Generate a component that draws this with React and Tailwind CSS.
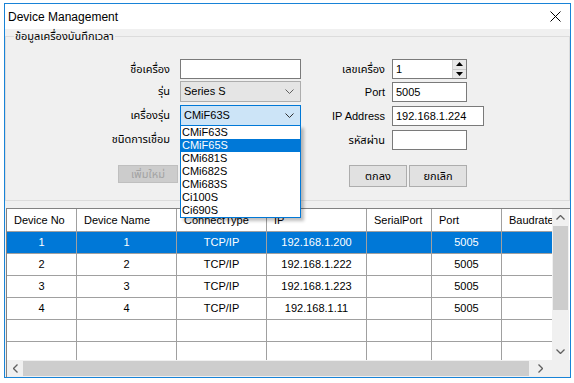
import React from "react";

const FONT = { fontFamily: '"Liberation Sans", "Noto Sans Thai", Tahoma, "DejaVu Sans", sans-serif' };

const MODELS = ["CMiF63S", "CMiF65S", "CMi681S", "CMi682S", "CMi683S", "Ci100S", "Ci690S"];

const COLS = [
  { name: "Device No", w: "w-[70px]" },
  { name: "Device Name", w: "w-[100px]" },
  { name: "ConnectType", w: "w-[90px]" },
  { name: "IP", w: "w-[100px]" },
  { name: "SerialPort", w: "w-[65px]" },
  { name: "Port", w: "w-[70px]" },
  { name: "Baudrate", w: "w-[70px]" },
];

const ROWS = [
  ["1", "1", "TCP/IP", "192.168.1.200", "", "5005", ""],
  ["2", "2", "TCP/IP", "192.168.1.222", "", "5005", ""],
  ["3", "3", "TCP/IP", "192.168.1.223", "", "5005", ""],
  ["4", "4", "TCP/IP", "192.168.1.11", "", "5005", ""],
  ["", "", "", "", "", "", ""],
  ["", "", "", "", "", "", ""],
];

function Chevron({ color = "#606060" }) {
  return (
    <svg width="9" height="6" viewBox="0 0 9 6" className="shrink-0">
      <path d="M0.5 0.5 L4.5 4.5 L8.5 0.5" fill="none" stroke={color} strokeWidth="1" />
    </svg>
  );
}

function Label({ children, w }) {
  return <div className={`${w} shrink-0 text-right text-[11px] leading-none text-black`}>{children}</div>;
}

function TextBox({ value, w = "w-[75px]", h = "h-[20px]" }) {
  return (
    <div className={`${w} ${h} shrink-0 bg-white border border-[#7a7a7a] flex items-center px-[3px] text-[11px] text-black`}>
      {value}
    </div>
  );
}

function Dropdown() {
  return (
    <div className="absolute -left-[1px] top-full z-20 w-[121px] bg-white border border-[#0078d7] shadow-[3px_3px_3px_rgba(0,0,0,0.25)]">
      {MODELS.map((m, i) => (
        <div
          key={m}
          className={`h-[13px] leading-[13px] pl-[1px] text-[11px] overflow-hidden ${i === 1 ? "bg-[#0078d7] text-white" : "text-black"}`}
        >
          {m}
        </div>
      ))}
    </div>
  );
}

export default function App() {
  return (
    <div className="w-[574px] h-[383px] bg-white overflow-hidden" style={FONT}>
      <div className="ml-[4px] mt-[3px] w-[567px] h-[375px] border border-[#1883d7] flex flex-col">
        {/* title bar */}
        <div className="h-[25px] bg-white flex items-center justify-between pl-[3px] pr-[9px]">
          <span className="text-[12px] text-black">Device Management</span>
          <svg width="11" height="11" viewBox="0 0 11 11">
            <path d="M0.5 0.5 L10.5 10.5 M10.5 0.5 L0.5 10.5" stroke="#000" strokeWidth="1" />
          </svg>
        </div>

        {/* body */}
        <div className="flex-1 bg-[#f0f0f0] flex flex-col">
          {/* group box */}
          <div className="mt-[7px] h-[165px] border border-[#dcdcdc]">
            <div className="-mt-[7px] ml-[8px] w-fit px-[1px] bg-[#f0f0f0] h-[13px] leading-[13px] text-[11px] text-black">
              ข้อมูลเครื่องบันทึกเวลา
            </div>
            <div className="mt-[16px] flex">
              {/* left column */}
              <div className="w-[295px] shrink-0 flex flex-col">
                <div className="h-[20px] flex items-center">
                  <Label w="w-[164px]">ชื่อเครื่อง</Label>
                  <div className="ml-[10px]">
                    <TextBox value="" w="w-[121px]" />
                  </div>
                </div>
                <div className="mt-[2px] h-[21px] flex items-center">
                  <Label w="w-[164px]">รุ่น</Label>
                  <div className="ml-[10px] w-[121px] h-[21px] bg-[#e5e5e5] border border-[#adadad] flex items-center justify-between pl-[3px] pr-[6px] text-[11px] text-black">
                    <span>Series S</span>
                    <Chevron />
                  </div>
                </div>
                <div className="mt-[3px] h-[21px] flex items-center">
                  <Label w="w-[164px]">เครื่องรุ่น</Label>
                  <div className="relative ml-[10px] w-[121px] h-[21px] bg-[#cce4f7] border border-[#0078d7] flex items-center justify-between pl-[3px] pr-[6px] text-[11px] text-black">
                    <span>CMiF63S</span>
                    <Chevron color="#303030" />
                    <Dropdown />
                  </div>
                </div>
                <div className="mt-[3px] h-[21px] flex items-center">
                  <Label w="w-[164px]">ชนิดการเชื่อม</Label>
                  <div className="ml-[10px] w-[121px] h-[21px] bg-[#e1e1e1] border border-[#adadad]" />
                </div>
                <div className="mt-[15px] ml-[112px] w-[60px] h-[18px] bg-[#cccccc] border border-[#bfbfbf] flex items-center justify-center text-[11px] text-[#a3a3a3]">
                  เพิ่มใหม่
                </div>
              </div>

              {/* right column */}
              <div className="w-[183px] shrink-0 flex flex-col">
                <div className="h-[20px] flex items-center">
                  <Label w="w-[84px]">เลขเครื่อง</Label>
                  <div className="ml-[7px] w-[75px] h-[20px] bg-white border border-[#7a7a7a] flex items-center text-[11px] text-black">
                    <span className="flex-1 pl-[3px]">1</span>
                    <div className="w-[14px] h-full flex flex-col border-l border-[#d0d0d0]">
                      <div className="flex-1 bg-[#e8e8e8] border-b border-[#c8c8c8] flex items-center justify-center">
                        <svg width="7" height="4" viewBox="0 0 7 4"><path d="M0 4 L3.5 0 L7 4 Z" fill="#000" /></svg>
                      </div>
                      <div className="flex-1 bg-[#e8e8e8] flex items-center justify-center">
                        <svg width="7" height="4" viewBox="0 0 7 4"><path d="M0 0 L3.5 4 L7 0 Z" fill="#000" /></svg>
                      </div>
                    </div>
                  </div>
                </div>
                <div className="mt-[3px] h-[20px] flex items-center">
                  <Label w="w-[84px]">Port</Label>
                  <div className="ml-[7px]"><TextBox value="5005" /></div>
                </div>
                <div className="mt-[4px] h-[20px] flex items-center">
                  <Label w="w-[84px]">IP Address</Label>
                  <div className="ml-[7px]"><TextBox value="192.168.1.224" w="w-[92px]" /></div>
                </div>
                <div className="mt-[4px] h-[20px] flex items-center">
                  <Label w="w-[84px]">รหัสผ่าน</Label>
                  <div className="ml-[7px]"><TextBox value="" /></div>
                </div>
                <div className="mt-[15px] ml-[48px] flex gap-[2px]">
                  <div className="w-[58px] h-[22px] bg-[#e1e1e1] border border-[#adadad] flex items-center justify-center text-[11px] text-black">ตกลง</div>
                  <div className="w-[58px] h-[22px] bg-[#e1e1e1] border border-[#adadad] flex items-center justify-center text-[11px] text-black">ยกเลิก</div>
                </div>
              </div>
            </div>
          </div>

          {/* data grid */}
          <div className="mt-[7px] ml-[1px] flex-1 border-t border-l border-[#828282] flex flex-col bg-white">
            <div className="h-[151px] flex">
              <div className="w-[545px] overflow-hidden">
                <div className="flex w-max h-[23px] border-b border-[#a0a0a0]">
                  {COLS.map((c) => (
                    <div key={c.name} className={`${c.w} h-full border-r border-[#a0a0a0] pl-[7px] flex items-center text-[11px] text-black whitespace-nowrap overflow-hidden`}>
                      {c.name}
                    </div>
                  ))}
                </div>
                {ROWS.map((r, ri) => (
                  <div
                    key={ri}
                    className={`flex w-max h-[22px] border-b border-[#a0a0a0] ${ri === 0 ? "bg-[#0078d7] text-white" : "text-black"}`}
                  >
                    {r.map((v, ci) => (
                      <div key={ci} className={`${COLS[ci].w} h-full border-r border-[#a0a0a0] flex items-center justify-center text-[11px]`}>
                        {v}
                      </div>
                    ))}
                  </div>
                ))}
              </div>
              {/* vertical scrollbar */}
              <div className="w-[17px] bg-[#f0f0f0] flex flex-col items-center">
                <div className="h-[17px] flex items-center justify-center">
                  <svg width="9" height="5" viewBox="0 0 9 5"><path d="M0.5 4.5 L4.5 0.5 L8.5 4.5" fill="none" stroke="#606060" strokeWidth="1.3" /></svg>
                </div>
                <div className="w-[15px] h-[84px] bg-[#cdcdcd]" />
                <div className="flex-1" />
                <div className="h-[17px] flex items-center justify-center">
                  <svg width="9" height="5" viewBox="0 0 9 5"><path d="M0.5 0.5 L4.5 4.5 L8.5 0.5" fill="none" stroke="#606060" strokeWidth="1.3" /></svg>
                </div>
              </div>
            </div>
            {/* horizontal scrollbar */}
            <div className="flex-1 flex">
              <div className="w-[545px] bg-[#f0f0f0] flex items-center">
                <div className="w-[16px] flex items-center justify-center">
                  <svg width="5" height="9" viewBox="0 0 5 9"><path d="M4.5 0.5 L0.5 4.5 L4.5 8.5" fill="none" stroke="#606060" strokeWidth="1.3" /></svg>
                </div>
                <div className="w-[506px] h-[15px] bg-[#cdcdcd]" />
                <div className="flex-1 flex items-center justify-center">
                  <svg width="5" height="9" viewBox="0 0 5 9"><path d="M0.5 0.5 L4.5 4.5 L0.5 8.5" fill="none" stroke="#606060" strokeWidth="1.3" /></svg>
                </div>
              </div>
              <div className="flex-1 bg-[#f0f0f0]" />
            </div>
          </div>
        </div>
      </div>
    </div>
  );
}
